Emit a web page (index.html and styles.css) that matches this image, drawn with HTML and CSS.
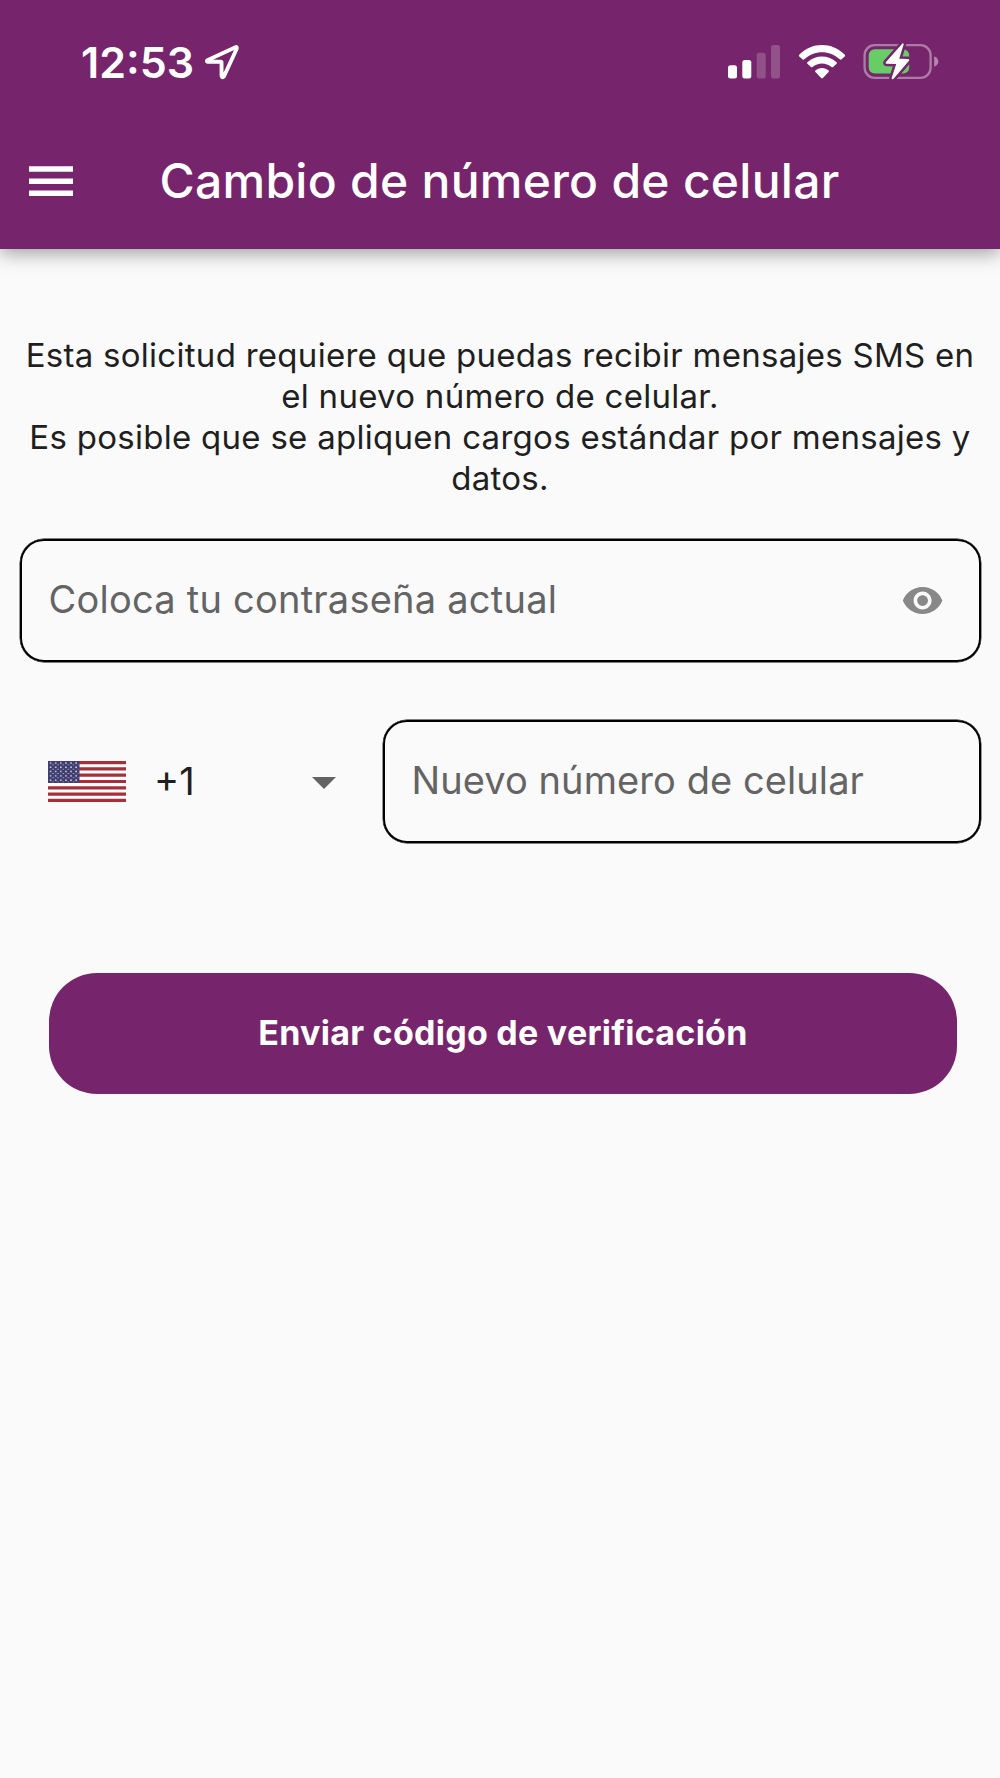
FILE: index.html
```html
<!DOCTYPE html>
<html lang="es">
<head>
<meta charset="utf-8">
<title>Cambio de número de celular</title>
<link rel="stylesheet" href="styles.css">
</head>
<body>
<header class="header">
  <div class="status">
    <span class="time">12:53</span>
    <svg class="location" width="36" height="36" viewBox="0 0 36 36"><path d="M32.500 3.200L4.400 16.200Q3.200 17.400 5 17.800L17.800 17.800Q18.500 17.800 18.500 18.500L18.600 32.200Q19.300 34.200 20.900 32.500L33.700 4.700Q34.100 2.500 32.500 3.200Z" fill="none" stroke="#fff" stroke-width="3.900" stroke-linejoin="round"/></svg>
    <div class="indicators">
      <svg width="54" height="36" viewBox="0 0 54 36" fill="#fff"><rect x="1" y="21.300" width="9" height="13.200" rx="2.500"/><rect x="15.300" y="16" width="9" height="18.500" rx="2.500"/><g opacity=".2"><rect x="29.700" y="8.700" width="9" height="25.800" rx="2.500"/><rect x="44" y="1" width="9" height="33.500" rx="2.500"/></g></svg>
      <svg class="wifi" width="48" height="36" viewBox="0 0 48 36" fill="#fff"><path d="M1.200 10.800C14-2.200 34-2.200 46.800 10.800Q47.500 11.700 46.700 12.500L43.300 15.500Q42.500 16 41.700 15.300C31.500 5.800 16.500 5.800 6.300 15.300Q5.500 16 4.700 15.500L1.300 12.500Q.5 11.700 1.200 10.800Z"/><path d="M9.400 18.200C17.500 10.500 30.500 10.500 38.600 18.200Q39.300 19 38.600 19.800L35.100 23Q34.300 23.600 33.500 23C28 18.300 20 18.300 14.500 23Q13.700 23.600 12.900 23L9.400 19.800Q8.700 19 9.400 18.200Z"/><path d="M17.400 26.600C21 23.200 27 23.200 30.600 26.600Q31.300 27.400 30.600 28.100L24.900 34Q24 34.800 23.100 34L17.400 28.100Q16.700 27.400 17.400 26.600Z"/></svg>
      <svg class="battery" width="77" height="38" viewBox="0 0 77 38"><rect x="1.600" y="2.200" width="66" height="32.600" rx="10" fill="none" stroke="#fff" stroke-opacity=".4" stroke-width="2.300"/><path d="M71.200 13.200Q75.300 15 75.300 18.500T71.200 23.800Z" fill="#fff" fill-opacity=".45"/><rect x="5.700" y="6.300" width="40.500" height="24.300" rx="6" fill="#67ce67"/><path d="M39.400.500L22.800 19.300Q22.300 20.800 23.600 20.800L33.200 20.900L28.600 35.300Q29 37 30.600 35.700L46.200 17.500Q46.500 16 45.200 15.900L36.200 15.700L40.700 1.300Q40.500 0 39.400.500Z" fill="#fff" stroke="#76256c" stroke-width="5" paint-order="stroke"/></svg>
    </div>
  </div>
  <div class="appbar">
    <svg width="44" height="30" viewBox="0 0 44 30" fill="#fff"><path d="M0 .300h44v5.500H0zM0 12.500h44v5.400H0zM0 24.600h44V30H0z"/></svg>
    <h1 class="title">Cambio de número de celular</h1>
  </div>
</header>
<main class="content">
  <p class="notice">Esta solicitud requiere que puedas recibir mensajes SMS en<br>el nuevo número de celular.<br>Es posible que se apliquen cargos estándar por mensajes y<br>datos.</p>
  <div class="field">
    <span class="hint">Coloca tu contraseña actual</span>
    <svg width="43.200" height="43.200" viewBox="0 0 24 24" fill="#888"><path d="M12 4.500C7 4.500 2.730 7.610 1 12c1.730 4.390 6 7.500 11 7.500s9.270-3.110 11-7.500c-1.730-4.390-6-7.500-11-7.500zM12 17c-2.760 0-5-2.240-5-5s2.240-5 5-5 5 2.240 5 5-2.240 5-5 5zm0-8c-1.660 0-3 1.340-3 3s1.340 3 3 3 3-1.340 3-3-1.340-3-3-3z"/></svg>
  </div>
  <div class="phone">
    <div class="country">
      <svg width="78" height="41" viewBox="0 0 78 41"><defs><pattern id="stars" width="5.100" height="4.300" patternUnits="userSpaceOnUse"><circle cx="2.600" cy="1.900" r=".85" fill="#dcdce8"/><circle cx="0" cy="4.050" r=".7" fill="#dcdce8"/><circle cx="5.100" cy="4.050" r=".7" fill="#dcdce8"/></pattern></defs><path fill="#fff" d="M0 0h78v41H0z"/><path d="M0 1.580h78M0 7.880h78M0 14.190h78M0 20.500h78M0 26.810h78M0 33.120h78M0 39.420h78" stroke="#a5303a" stroke-width="3.150"/><path fill="#3f3d70" d="M0 0h31.500v22H0z"/><path fill="url(#stars)" d="M1 .500h29.500v21H1z"/></svg>
      <span class="code">+1</span>
      <svg class="caret" width="24" height="12" viewBox="0 0 24 12"><path d="M0 0h24L12 12z" fill="#636363"/></svg>
    </div>
    <div class="field number"><span class="hint second">Nuevo número de celular</span></div>
  </div>
  <button class="submit">Enviar código de verificación</button>
</main>
</body>
</html>
```
FILE: styles.css
```css
* { box-sizing: border-box; }
body { margin: 0; min-height: 1778px; background: #fafafa; font-family: Inter, "Liberation Sans", sans-serif; color: #1f1f1f; }
svg { display: block; flex: none; }
.header { height: 248.700px; background: #76256c; color: #fff; box-shadow: 0 4px 18px rgba(0,0,0,.38); }
.status { display: flex; align-items: center; height: 113.500px; padding: 9.500px 60px 0 81px; }
.time { font-size: 43px; font-weight: 600; line-height: 50px; }
.location { margin: 1px 0 0 9px; }
.indicators { display: flex; align-items: center; margin-left: auto; }
.wifi { margin-left: 17px; }
.battery { margin-left: 17px; }
.appbar { display: flex; align-items: center; height: 135.200px; padding-left: 29px; }
.title { margin: 0 0 0 86.500px; font-size: 48px; font-weight: 500; line-height: 56px; letter-spacing: .27px; white-space: nowrap; }
.content { padding: 86px 19.500px 0; }
.notice { margin: 0; font-size: 33px; font-weight: 370; line-height: 41.100px; letter-spacing: .28px; text-align: center; white-space: nowrap; }
.field { display: flex; align-items: center; justify-content: space-between; height: 123px; margin-top: 40px; padding: 0 34.500px 0 27px; border: 2px solid #000; border-radius: 24px; box-shadow: 0 0 0 .4px #000; }
.hint { padding-bottom: 4px; font-size: 38px; font-weight: 370; line-height: 46px; letter-spacing: .23px; color: #646464; white-space: nowrap; }
.second { padding-bottom: 2px; letter-spacing: .08px; }
.phone { display: flex; justify-content: space-between; margin-top: 57.500px; }
.country { display: flex; align-items: center; width: 316px; padding-left: 28.500px; }
.code { margin-left: 28px; padding-bottom: 1px; font-size: 38px; line-height: 46px; }
.caret { margin: 3px 0 0 auto; }
.number { width: 598px; margin: 0; }
.submit { display: block; width: 908px; height: 121px; margin: 130.500px 0 0 29px; padding: 0 0 2px 1px; border: 0; border-radius: 48px; background: #76256c; color: #fff; font: 700 34px Inter, "Liberation Sans", sans-serif; letter-spacing: .26px; }
```
